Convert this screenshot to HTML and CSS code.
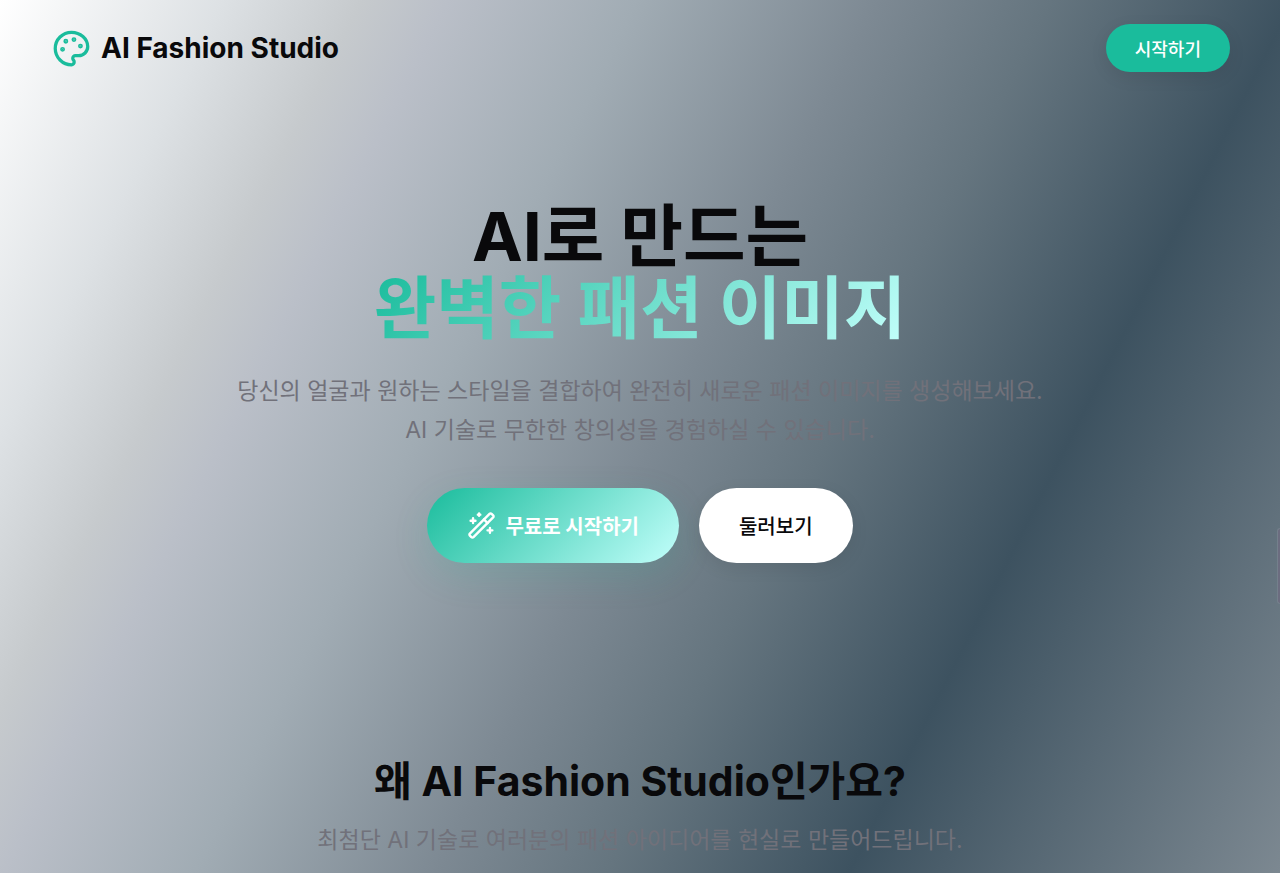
FILE: index.html
```html
<!DOCTYPE html>
<html lang="ko">

<head>
    <meta charset="UTF-8">
    <meta name="viewport" content="width=device-width, initial-scale=1.0">
    <title>AI Fashion Studio</title>
    <link rel="stylesheet" href="styles.css">
</head>

<body>
    <header class="header">
        <a href="#" class="logo">
            <svg class="logo-icon" viewBox="0 0 24 24" aria-hidden="true">
                <g fill="currentColor">
                    <circle cx="13.5" cy="6.5" r=".5" />
                    <circle cx="17.5" cy="10.5" r=".5" />
                    <circle cx="8.5" cy="7.5" r=".5" />
                    <circle cx="6.5" cy="12.5" r=".5" />
                </g>
                <path d="M12 2C6.5 2 2 6.5 2 12s4.5 10 10 10c.926 0 1.648-.746 1.648-1.688 0-.437-.18-.835-.437-1.125-.29-.289-.438-.652-.438-1.125a1.64 1.64 0 0 1 1.668-1.668h1.996c3.051 0 5.555-2.503 5.555-5.554C21.965 6.012 17.461 2 12 2z" />
            </svg>
            <span>AI Fashion Studio</span>
        </a>
        <button type="button" class="btn btn-small">시작하기</button>
    </header>

    <main>
        <section class="hero">
            <h1>AI로 만드는<br><span class="gradient-text">완벽한 패션 이미지</span></h1>
            <p class="lead">당신의 얼굴과 원하는 스타일을 결합하여 완전히 새로운 패션 이미지를 생성해보세요.<br>AI 기술로 무한한 창의성을 경험하실 수 있습니다.</p>
            <div class="actions">
                <button type="button" class="btn btn-primary">
                    <svg class="btn-icon" viewBox="0 0 24 24" aria-hidden="true">
                        <path d="m21.64 3.64-1.28-1.28a1.21 1.21 0 0 0-1.72 0L2.36 18.64a1.21 1.21 0 0 0 0 1.72l1.28 1.28a1.2 1.2 0 0 0 1.72 0L21.64 5.36a1.2 1.2 0 0 0 0-1.72" />
                        <path d="m14 7 3 3M5 6v4M19 14v4M10 2v2M7 8H3M21 16h-4M11 3H9" />
                    </svg>
                    무료로 시작하기
                </button>
                <button type="button" class="btn btn-light">둘러보기</button>
            </div>
        </section>

        <section class="features">
            <h2>왜 AI Fashion Studio인가요?</h2>
            <p>최첨단 AI 기술로 여러분의 패션 아이디어를 현실로 만들어드립니다.</p>
        </section>
    </main>

    <div class="side-handle"></div>
</body>

</html>
```

FILE: styles.css
```css
* {
    box-sizing: border-box;
}

body {
    margin: 0;
    min-height: 100vh;
    font-family: Inter, "Noto Sans CJK KR", sans-serif;
    color: #09090b;
    background: linear-gradient(117deg, #ffffff 0%, #dde1e4 13%, #c6cacd 21%, #babfc8 26%, #a1acb4 37%, #7d8993 51%, #65757f 61%, #3d5260 75%, #7c8891 100%);
}

h1,
h2,
p {
    margin: 0;
}

.header {
    display: flex;
    align-items: center;
    justify-content: space-between;
    padding: 24px 50px 24px 52px;
}

.logo {
    display: flex;
    align-items: center;
    gap: 10px;
    color: inherit;
    font-size: 28px;
    font-weight: 700;
    text-decoration: none;
}

.logo-icon,
.btn-icon {
    fill: none;
    stroke: currentColor;
    stroke-width: 2;
    stroke-linecap: round;
    stroke-linejoin: round;
}

.logo-icon {
    width: 39px;
    height: 39px;
    color: #1abc9c;
}

.btn {
    display: flex;
    align-items: center;
    justify-content: center;
    border: 0;
    border-radius: 40px;
    font-family: inherit;
    cursor: pointer;
}

.btn-small {
    height: 48px;
    padding: 0 29px;
    font-size: 18px;
    font-weight: 500;
    color: white;
    background: #1abc9c;
    box-shadow: 0 5px 18px rgba(0, 0, 0, 0.08);
}

.hero {
    padding: 104px 24px 0;
    text-align: center;
}

.hero h1 {
    font-size: 68px;
    font-weight: 700;
    line-height: 72px;
}

.gradient-text {
    display: inline-block;
    background: linear-gradient(135deg, #1abc9c, #c2fffb);
    -webkit-background-clip: text;
    background-clip: text;
    color: transparent;
}

.lead,
.features p {
    font-size: 23px;
    line-height: 39px;
    color: #71717a;
}

.lead {
    margin-top: 28px;
}

.actions {
    display: flex;
    justify-content: center;
    gap: 20px;
    margin-top: 38px;
}

.btn-primary,
.btn-light {
    height: 75px;
    padding: 0 40px;
    font-size: 20px;
}

.btn-primary {
    gap: 9px;
    font-weight: 700;
    color: white;
    background: linear-gradient(135deg, #1abc9c, #c2fffb);
    box-shadow: 0 12px 36px rgba(26, 188, 156, 0.15);
}

.btn-icon {
    width: 29px;
    height: 29px;
}

.btn-light {
    font-weight: 500;
    color: #09090b;
    background: white;
    box-shadow: 0 5px 18px rgba(0, 0, 0, 0.08);
}

.features {
    padding: 190px 24px 0;
    text-align: center;
}

.features h2 {
    font-size: 41px;
    font-weight: 700;
    line-height: 56px;
}

.features p {
    margin-top: 12px;
}

/* tab peeking in from the right edge of the window */
.side-handle {
    position: fixed;
    top: 528px;
    right: 0;
    width: 3px;
    height: 76px;
    border: 1px solid #74808c;
    border-right: 0;
    border-radius: 3px 0 0 3px;
    background: #6c6d80;
}
```
